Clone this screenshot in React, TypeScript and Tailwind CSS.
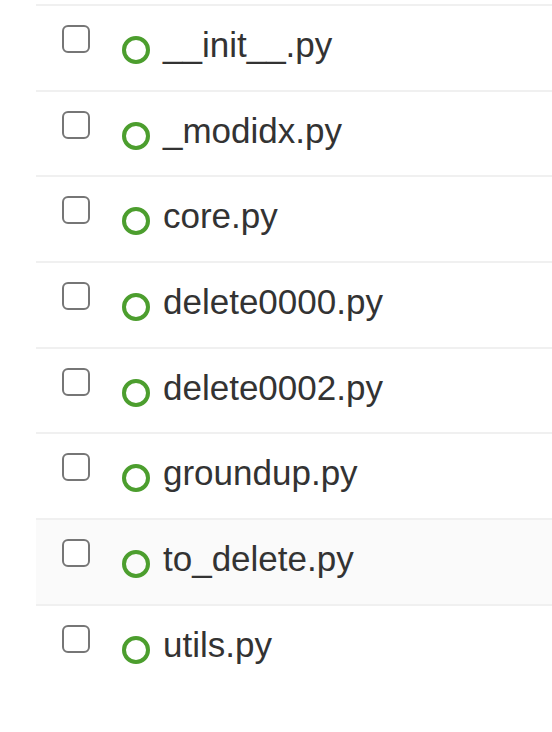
const files = [
  "__init__.py",
  "_modidx.py",
  "core.py",
  "delete0000.py",
  "delete0002.py",
  "groundup.py",
  "to_delete.py",
  "utils.py",
];

function FileRow({ name, hovered }: { name: string; hovered?: boolean }) {
  return (
    <div
      className={`flex items-start h-[85.7px] border-t-2 border-[#f0f0f0] ${hovered ? "bg-[#fafafa]" : "bg-white"}`}
    >
      <div className="ml-[26px] mt-[19px] w-[28px] h-[28px] rounded-[6px] border-2 border-[#767676] bg-white shrink-0" />
      <div className="ml-[32px] mt-[30px] w-[28px] h-[28px] rounded-full border-[4px] border-[#4c9e2e] shrink-0" />
      <span className="ml-[13px] text-[35px] leading-[78px] text-[#333]">{name}</span>
    </div>
  );
}

export default function App() {
  return (
    <div
      className="w-[552px] h-[732px] bg-white overflow-hidden"
      style={{ fontFamily: '"Liberation Sans", Arial, sans-serif' }}
    >
      <div className="mt-[4px] ml-[36px]">
        {files.map((f) => (
          <FileRow key={f} name={f} hovered={f === "to_delete.py"} />
        ))}
      </div>
    </div>
  );
}
